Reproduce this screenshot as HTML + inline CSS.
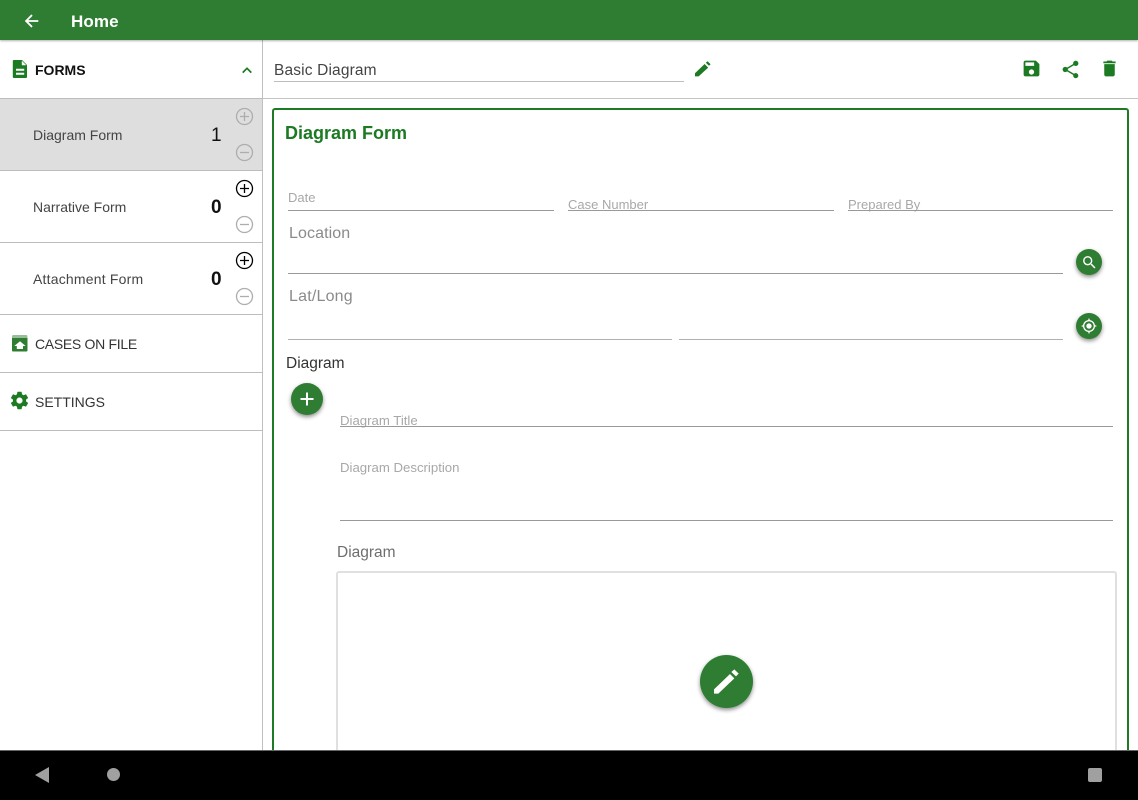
<!DOCTYPE html>
<html><head><meta charset="utf-8"><style>
html,body{margin:0;padding:0;background:#fff}
body{width:1138px;height:800px;overflow:hidden;position:relative;font-family:"Liberation Sans",sans-serif}
.a{position:absolute}
.t{position:absolute;white-space:nowrap;line-height:1}
.l{position:absolute;height:1px;background:#999}
.h{position:absolute;left:0;width:263px;height:1px;background:#bdbdbd}
.fab{position:absolute;border-radius:50%;background:#2e7d32;box-shadow:0 2px 4px rgba(0,0,0,.45)}
svg{position:absolute;display:block}
</style></head><body>
<div class="a" style="left:0;top:0;width:1138px;height:40px;background:#2e7d32;box-shadow:0 1px 2px rgba(0,0,0,.3);z-index:3"></div>
<svg style="left:20px;top:9px;z-index:4" width="24" height="24" viewBox="0 0 24 24"><path fill="#fff" d="M19 11H7.830l4.880-4.880L11.300 4.700 4 12l7.300 7.300 1.410-1.410L7.830 13H19z" transform="translate(1.200 1.200) scale(.9)"/></svg>
<div class="t" style="left:71px;top:13px;font-size:17px;font-weight:bold;color:#fff;letter-spacing:.1px;z-index:4">Home</div>

<!-- sidebar -->
<div class="a" style="left:0;top:99px;width:262px;height:71px;background:#dedede"></div>
<div class="a" style="left:262px;top:40px;width:1px;height:711px;background:#c0c0c0"></div>
<div class="h" style="top:98px"></div><div class="h" style="top:170px"></div><div class="h" style="top:242px"></div><div class="h" style="top:314px"></div><div class="h" style="top:372px"></div><div class="h" style="top:430px"></div>
<div class="a" style="left:263px;top:98px;width:875px;height:1px;background:#c4c4c4"></div>

<svg style="left:0;top:0" width="40" height="90" viewBox="0 0 40 90"><path fill="#1b7a22" d="M13.800 60H22l5 5v12c0 .6-.4 1-1 1H13.800c-.6 0-1-.4-1-1V61c0-.6.4-1 1-1z"/><path fill="#fff" d="M21.800 60.700V65.200H26.300zM16 68.700h8.200v2H16zM16 72.800h8.200v2H16z"/></svg>
<div class="t" style="left:35px;top:63px;font-size:14px;font-weight:bold;color:#111">FORMS</div>
<svg style="left:240px;top:63px" width="14" height="14" viewBox="0 0 14 14"><path fill="none" stroke="#1b7a22" stroke-width="1.700" d="M2.700 9.600 7 5.300l4.300 4.300"/></svg>

<div class="t" style="left:33px;top:128px;font-size:14px;color:#444">Diagram Form</div>
<div class="t" style="left:211px;top:126px;font-size:19px;color:#111">1</div>
<div class="t" style="left:33px;top:200px;font-size:14px;color:#444">Narrative Form</div>
<div class="t" style="left:211px;top:198px;font-size:19px;font-weight:bold;color:#111">0</div>
<div class="t" style="left:33px;top:272px;font-size:14px;color:#444;letter-spacing:.2px">Attachment Form</div>
<div class="t" style="left:211px;top:270px;font-size:19px;font-weight:bold;color:#111">0</div>

<svg style="left:235px;top:107px" width="19" height="19" viewBox="0 0 19 19"><g fill="none" stroke="#adadad" stroke-width="1.300"><circle cx="9.500" cy="9.500" r="8"/><path d="M9.500 5v9M5 9.500h9"/></g></svg>
<svg style="left:235px;top:143px" width="19" height="19" viewBox="0 0 19 19"><g fill="none" stroke="#adadad" stroke-width="1.300"><circle cx="9.500" cy="9.500" r="8"/><path d="M5 9.500h9"/></g></svg>
<svg style="left:235px;top:179px" width="19" height="19" viewBox="0 0 19 19"><g fill="none" stroke="#000" stroke-width="1.300"><circle cx="9.500" cy="9.500" r="8"/><path d="M9.500 5v9M5 9.500h9"/></g></svg>
<svg style="left:235px;top:215px" width="19" height="19" viewBox="0 0 19 19"><g fill="none" stroke="#adadad" stroke-width="1.300"><circle cx="9.500" cy="9.500" r="8"/><path d="M5 9.500h9"/></g></svg>
<svg style="left:235px;top:251px" width="19" height="19" viewBox="0 0 19 19"><g fill="none" stroke="#000" stroke-width="1.300"><circle cx="9.500" cy="9.500" r="8"/><path d="M9.500 5v9M5 9.500h9"/></g></svg>
<svg style="left:235px;top:287px" width="19" height="19" viewBox="0 0 19 19"><g fill="none" stroke="#adadad" stroke-width="1.300"><circle cx="9.500" cy="9.500" r="8"/><path d="M5 9.500h9"/></g></svg>

<svg style="left:0;top:330px" width="40" height="30" viewBox="0 330 40 30"><path fill="#2e7d32" d="M13 335.500h13.500c.6 0 1 .4 1 1h-15.500c0-.6.4-1 1-1zM12 337.500h15.500V350.500c0 .6-.4 1-1 1H13c-.6 0-1-.4-1-1z"/><path fill="#fff" d="M20 341.300l5.600 4.700H23v3h-6.200v-3H14.300z"/></svg>
<div class="t" style="left:35px;top:337px;font-size:14px;color:#333;letter-spacing:-.3px">CASES ON FILE</div>
<svg style="left:9px;top:390px" width="21" height="21" viewBox="0 0 24 24"><path fill="#1b7a22" d="M19.430 12.980c.040-.320.070-.640.070-.980s-.030-.660-.070-.980l2.110-1.650c.190-.150.240-.420.120-.640l-2-3.460c-.120-.220-.390-.300-.610-.220l-2.490 1c-.520-.400-1.080-.730-1.690-.980l-.380-2.650C14.460 2.180 14.250 2 14 2h-4c-.250 0-.460.180-.490.420l-.380 2.650c-.610.250-1.170.590-1.690.980l-2.490-1c-.230-.090-.490 0-.610.220l-2 3.460c-.130.220-.070.490.120.640l2.110 1.650c-.040.320-.070.650-.070.980s.030.660.070.980l-2.110 1.650c-.190.150-.240.420-.120.640l2 3.460c.120.220.390.300.610.220l2.490-1c.520.400 1.080.730 1.690.980l.380 2.650c.030.240.240.420.490.420h4c.250 0 .460-.180.490-.420l.380-2.650c.610-.250 1.170-.590 1.690-.980l2.490 1c.230.090.490 0 .610-.220l2-3.460c.120-.220.070-.49-.12-.64l-2.110-1.650zM12 15.500c-1.930 0-3.500-1.570-3.500-3.500s1.570-3.500 3.500-3.500 3.500 1.570 3.500 3.500-1.570 3.500-3.500 3.500z"/></svg>
<div class="t" style="left:35px;top:395px;font-size:14px;color:#333">SETTINGS</div>

<!-- top toolbar -->
<div class="t" style="left:274px;top:63px;font-size:15.500px;color:#444;letter-spacing:.15px">Basic Diagram</div>
<div class="a" style="left:274px;top:81px;width:410px;height:1px;background:#bdbdbd"></div>
<svg style="left:681px;top:49.500px" width="42" height="39" viewBox="0 0 210 195"><path fill="#1b7a22" d="M70 132V116L118 70 136 88 88 132zM124 64 133 56 148 71 140 79z"/></svg>
<svg style="left:1021px;top:58px" width="21" height="21" viewBox="0 0 24 24"><path fill="#1b7a22" d="M17 3H5c-1.110 0-2 .900-2 2v14c0 1.100.890 2 2 2h14c1.100 0 2-.900 2-2V7l-4-4zm-5 16c-1.660 0-3-1.340-3-3s1.340-3 3-3 3 1.340 3 3-1.340 3-3 3zm3-10H5V5h10v4z"/></svg>
<svg style="left:1060px;top:58.500px" width="21" height="21" viewBox="0 0 24 24"><path fill="#1b7a22" d="M18 16.080c-.760 0-1.440.300-1.960.770L8.910 12.700c.050-.230.090-.460.090-.700s-.040-.470-.090-.700l7.050-4.110c.540.500 1.250.810 2.040.810 1.660 0 3-1.340 3-3s-1.340-3-3-3-3 1.340-3 3c0 .240.040.470.090.700L8.040 9.810C7.500 9.310 6.790 9 6 9c-1.660 0-3 1.340-3 3s1.340 3 3 3c.790 0 1.500-.310 2.040-.810l7.120 4.160c-.050.210-.080.430-.080.650 0 1.610 1.310 2.920 2.920 2.920s2.920-1.310 2.920-2.920-1.310-2.920-2.920-2.920z"/></svg>
<svg style="left:1099px;top:58px" width="21" height="21" viewBox="0 0 24 24"><path fill="#1b7a22" d="M6 19c0 1.100.900 2 2 2h8c1.100 0 2-.900 2-2V7H6v12zM19 4h-3.500l-1-1h-5l-1 1H5v2h14V4z"/></svg>

<!-- form card -->
<div class="a" style="left:272px;top:108px;width:857px;height:660px;box-sizing:border-box;border:2px solid #1f7a26;border-radius:3px"></div>
<div class="t" style="left:285px;top:124px;font-size:18px;font-weight:bold;color:#1b7a22">Diagram Form</div>

<div class="t" style="left:288px;top:191px;font-size:13px;color:#a8a8a8">Date</div>
<div class="l" style="left:288px;top:210px;width:266px"></div>
<div class="t" style="left:568px;top:198px;font-size:13px;color:#a8a8a8">Case Number</div>
<div class="l" style="left:568px;top:210px;width:266px"></div>
<div class="t" style="left:848px;top:198px;font-size:13px;color:#a8a8a8">Prepared By</div>
<div class="l" style="left:848px;top:210px;width:265px"></div>

<div class="t" style="left:289px;top:226px;font-size:16px;color:#8a8a8a;letter-spacing:.1px">Location</div>
<div class="l" style="left:288px;top:273px;width:775px"></div>
<div class="fab" style="left:1076px;top:249px;width:26px;height:26px"></div>
<svg style="left:1080.500px;top:253.500px" width="17" height="17" viewBox="0 0 24 24"><path fill="#fff" d="M15.500 14h-.790l-.280-.270C15.410 12.590 16 11.110 16 9.500 16 5.910 13.090 3 9.500 3S3 5.910 3 9.500 5.910 16 9.500 16c1.610 0 3.090-.590 4.230-1.570l.270.280v.790l5 4.990L20.490 19l-4.990-5zm-6 0C7.010 14 5 11.990 5 9.500S7.010 5 9.500 5 14 7.010 14 9.500 11.990 14 9.500 14z"/></svg>

<div class="t" style="left:289px;top:289px;font-size:16px;color:#8a8a8a;letter-spacing:.2px">Lat/Long</div>
<div class="l" style="left:288px;top:339px;width:384px;background:#b0b0b0"></div>
<div class="l" style="left:679px;top:339px;width:384px;background:#b0b0b0"></div>
<div class="fab" style="left:1076px;top:313px;width:26px;height:26px"></div>
<svg style="left:1081px;top:318px" width="16" height="16" viewBox="0 0 24 24"><path fill="#fff" d="M12 8c-2.210 0-4 1.790-4 4s1.790 4 4 4 4-1.790 4-4-1.790-4-4-4zm8.940 3c-.460-4.170-3.770-7.480-7.940-7.940V1h-2v2.060C6.830 3.520 3.520 6.830 3.060 11H1v2h2.060c.460 4.170 3.770 7.480 7.940 7.940V23h2v-2.060c4.170-.460 7.480-3.770 7.940-7.940H23v-2h-2.060zM12 19c-3.870 0-7-3.130-7-7s3.130-7 7-7 7 3.130 7 7-3.130 7-7 7z"/></svg>

<div class="t" style="left:286px;top:356px;font-size:15.500px;color:#333">Diagram</div>
<div class="fab" style="left:291px;top:383px;width:32px;height:32px"></div>
<svg style="left:298px;top:390px" width="18" height="18" viewBox="0 0 18 18"><path fill="none" stroke="#fff" stroke-width="2" d="M9 2.500v13M2.500 9h13"/></svg>

<div class="t" style="left:340px;top:414px;font-size:13.200px;color:#a8a8a8">Diagram Title</div>
<div class="l" style="left:340px;top:426px;width:773px"></div>
<div class="t" style="left:340px;top:461px;font-size:13.200px;color:#a8a8a8">Diagram Description</div>
<div class="l" style="left:340px;top:520px;width:773px"></div>
<div class="t" style="left:337px;top:545px;font-size:15.500px;color:#6e6e6e">Diagram</div>
<div class="a" style="left:336px;top:571px;width:781px;height:200px;box-sizing:border-box;border:2px solid #e0e0e0;border-radius:3px"></div>
<div class="fab" style="left:700px;top:655px;width:53px;height:53px"></div>
<svg style="left:690px;top:650px" width="70" height="65" viewBox="0 0 210 195"><path fill="#fff" d="M72 131V118L120 72 133 85 85 131zM124 66 133 58 146 71 138 79z"/></svg>

<!-- nav bar -->
<div class="a" style="left:0;top:750px;width:1138px;height:50px;background:#000;border-top:1px solid #666;box-sizing:border-box;z-index:5"></div>
<svg style="left:30px;top:763px;z-index:6" width="24" height="24" viewBox="0 0 24 24"><path fill="#a0a0a0" d="M5 12 19 4v16z"/></svg>
<div class="a" style="left:107px;top:768px;width:13px;height:13px;border-radius:50%;background:#a0a0a0;z-index:6"></div>
<div class="a" style="left:1088px;top:768px;width:14px;height:14px;border-radius:2px;background:#a0a0a0;z-index:6"></div>
</body></html>
